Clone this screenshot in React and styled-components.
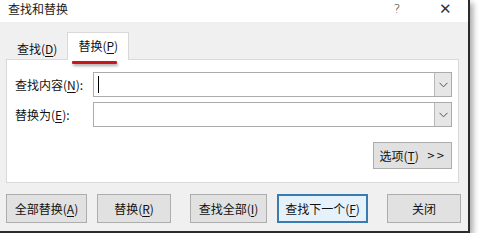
import React from "react";
import styled, { createGlobalStyle } from "styled-components";

const Global = createGlobalStyle`
  html, body { margin: 0; padding: 0; background: #ffffff; }
  body { font-family: "Microsoft YaHei", "Noto Sans CJK SC", "Noto Sans", sans-serif; }
  * { box-sizing: border-box; }
`;

const Window = styled.div`
  width: 470px;
  height: 233px;
  background: #f0f0f0;
  border-right: 2px solid #2b2b2b;
  border-bottom: 2px solid #2b2b2b;
  box-shadow: 3px 3px 6px rgba(0, 0, 0, 0.35);
  display: flex;
  flex-direction: column;
  font-size: 12px;
  color: #111;
`;

const TitleBar = styled.div`
  height: 22px;
  background: #ffffff;
  display: flex;
  align-items: flex-start;
  padding: 1px 0 0 8px;
  font-size: 12px;
  color: #1a1a1a;
`;

const Title = styled.div`
  flex: 1;
  line-height: 16px;
`;

const TitleButton = styled.div`
  width: ${(p) => p.$w}px;
  margin-right: ${(p) => p.$mr}px;
  text-align: center;
  font-size: ${(p) => p.$fs}px;
  color: #333;
  line-height: 16px;
  font-family: "DejaVu Sans", sans-serif;
  font-weight: 300;
`;

const Body = styled.div`
  flex: 1;
  display: flex;
  flex-direction: column;
  padding: 10px 9px 0 6px;
`;

const TabRow = styled.div`
  display: flex;
  align-items: flex-end;
  height: 28px;
  padding-left: 1px;
  position: relative;
  z-index: 1;
  margin-bottom: -1px;
`;

const Tab = styled.div`
  position: relative;
  height: ${(p) => (p.$active ? 28 : 25)}px;
  padding: 0 ${(p) => (p.$active ? 10 : 9)}px;
  display: flex;
  align-items: center;
  background: ${(p) => (p.$active ? "#ffffff" : "transparent")};
  border: 1px solid ${(p) => (p.$active ? "#d9d9d9" : "transparent")};
  border-bottom: none;
  white-space: nowrap;
  padding-bottom: ${(p) => (p.$active ? 3 : 0)}px;
`;

const RedMark = styled.div`
  position: absolute;
  left: 4px;
  top: 28px;
  width: 45px;
  height: 3px;
  border-radius: 1px;
  background: #c8161d;
  box-shadow: 1px 2px 3px rgba(0, 0, 0, 0.35);
`;

const Key = styled.span`
  text-decoration: underline;
  text-underline-offset: 2px;
`;

const Panel = styled.div`
  height: 124px;
  background: #ffffff;
  border: 1px solid #d9d9d9;
  display: flex;
  flex-direction: column;
  padding: 12px 6px 0 8px;
`;

const FieldRow = styled.div`
  display: flex;
  align-items: center;
  height: 25px;
  margin-bottom: 5px;
`;

const Label = styled.div`
  width: 78px;
  white-space: nowrap;
`;

const Combo = styled.div`
  flex: 1;
  height: 25px;
  border: 1px solid #ababab;
  display: flex;
  align-items: stretch;
  background: #fff;
`;

const InputArea = styled.div`
  flex: 1;
  display: flex;
  align-items: center;
  padding-left: 4px;
`;

const Caret = styled.div`
  width: 1px;
  height: 17px;
  background: #000;
`;

const DropButton = styled.div`
  width: 17px;
  background: #e6e6e6;
  border-left: 1px solid #b9b9b9;
  display: flex;
  align-items: center;
  justify-content: center;
`;

const OptionsRow = styled.div`
  display: flex;
  justify-content: flex-end;
  margin-top: 10px;
`;

const Button = styled.div`
  width: ${(p) => p.$w}px;
  height: ${(p) => p.$h || 29}px;
  margin-left: ${(p) => p.$ml || 0}px;
  background: ${(p) => (p.$focus ? "#e5f1fb" : "#e1e1e1")};
  border: ${(p) => (p.$focus ? "2px solid #3a7bb0" : "1px solid #adadad")};
  display: flex;
  align-items: center;
  justify-content: center;
  white-space: nowrap;
  flex-shrink: 0;
`;

const Arrows = styled.span`
  margin-left: 8px;
  font-size: 10px;
  letter-spacing: 1px;
  font-family: "DejaVu Sans", sans-serif;
`;

const ButtonRow = styled.div`
  display: flex;
  margin-top: 11px;
`;

const Chevron = () => (
  <svg width="9" height="6" viewBox="0 0 9 6">
    <path d="M0.5 0.8 L4.5 4.8 L8.5 0.8" fill="none" stroke="#555" strokeWidth="1" />
  </svg>
);

export default function App() {
  return (
    <>
      <Global />
      <Window>
        <TitleBar>
          <Title>查找和替换</Title>
          <TitleButton $w={20} $mr={25} $fs={13}>?</TitleButton>
          <TitleButton $w={26} $mr={10} $fs={15}>✕</TitleButton>
        </TitleBar>
        <Body>
          <TabRow>
            <Tab>
              查找(<Key>D</Key>)
            </Tab>
            <Tab $active>
              替换(<Key>P</Key>)
              <RedMark />
            </Tab>
          </TabRow>
          <Panel>
            <FieldRow>
              <Label>
                查找内容(<Key>N</Key>):
              </Label>
              <Combo>
                <InputArea>
                  <Caret />
                </InputArea>
                <DropButton>
                  <Chevron />
                </DropButton>
              </Combo>
            </FieldRow>
            <FieldRow>
              <Label>
                替换为(<Key>E</Key>):
              </Label>
              <Combo>
                <InputArea />
                <DropButton>
                  <Chevron />
                </DropButton>
              </Combo>
            </FieldRow>
            <OptionsRow>
              <Button $w={79} $h={27}>
                选项(<Key>T</Key>)<Arrows>&gt;&gt;</Arrows>
              </Button>
            </OptionsRow>
          </Panel>
          <ButtonRow>
            <Button $w={81}>
              全部替换(<Key>A</Key>)
            </Button>
            <Button $w={74} $ml={10}>
              替换(<Key>R</Key>)
            </Button>
            <Button $w={77} $ml={19}>
              查找全部(<Key>I</Key>)
            </Button>
            <Button $w={91} $ml={10} $focus>
              查找下一个(<Key>F</Key>)
            </Button>
            <Button $w={74} $ml={19}>
              关闭
            </Button>
          </ButtonRow>
        </Body>
      </Window>
    </>
  );
}
